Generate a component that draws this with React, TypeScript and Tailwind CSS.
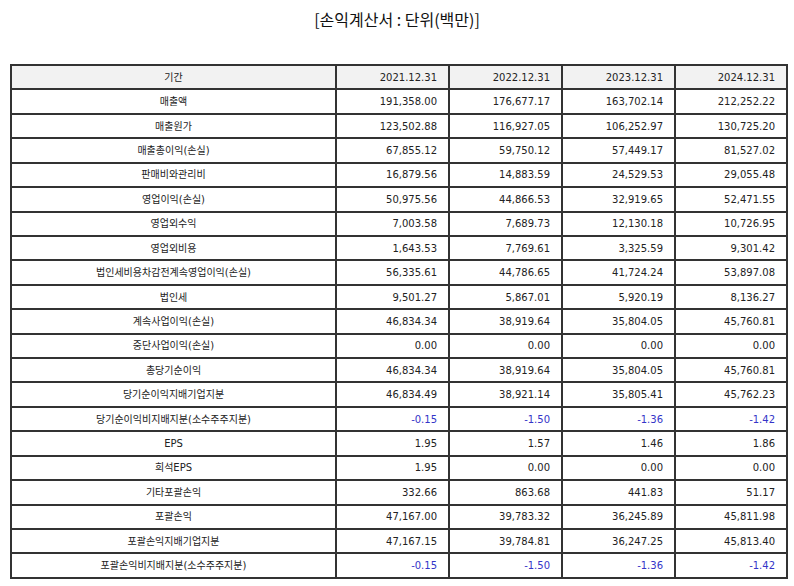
import React from "react";

type Row = { label: string; values: string[] };

const rows: Row[] = [
  { label: "매출액", values: ["191,358.00", "176,677.17", "163,702.14", "212,252.22"] },
  { label: "매출원가", values: ["123,502.88", "116,927.05", "106,252.97", "130,725.20"] },
  { label: "매출총이익(손실)", values: ["67,855.12", "59,750.12", "57,449.17", "81,527.02"] },
  { label: "판매비와관리비", values: ["16,879.56", "14,883.59", "24,529.53", "29,055.48"] },
  { label: "영업이익(손실)", values: ["50,975.56", "44,866.53", "32,919.65", "52,471.55"] },
  { label: "영업외수익", values: ["7,003.58", "7,689.73", "12,130.18", "10,726.95"] },
  { label: "영업외비용", values: ["1,643.53", "7,769.61", "3,325.59", "9,301.42"] },
  { label: "법인세비용차감전계속영업이익(손실)", values: ["56,335.61", "44,786.65", "41,724.24", "53,897.08"] },
  { label: "법인세", values: ["9,501.27", "5,867.01", "5,920.19", "8,136.27"] },
  { label: "계속사업이익(손실)", values: ["46,834.34", "38,919.64", "35,804.05", "45,760.81"] },
  { label: "중단사업이익(손실)", values: ["0.00", "0.00", "0.00", "0.00"] },
  { label: "총당기순이익", values: ["46,834.34", "38,919.64", "35,804.05", "45,760.81"] },
  { label: "당기순이익지배기업지분", values: ["46,834.49", "38,921.14", "35,805.41", "45,762.23"] },
  { label: "당기순이익비지배지분(소수주주지분)", values: ["-0.15", "-1.50", "-1.36", "-1.42"] },
  { label: "EPS", values: ["1.95", "1.57", "1.46", "1.86"] },
  { label: "희석EPS", values: ["1.95", "0.00", "0.00", "0.00"] },
  { label: "기타포괄손익", values: ["332.66", "863.68", "441.83", "51.17"] },
  { label: "포괄손익", values: ["47,167.00", "39,783.32", "36,245.89", "45,811.98"] },
  { label: "포괄손익지배기업지분", values: ["47,167.15", "39,784.81", "36,247.25", "45,813.40"] },
  { label: "포괄손익비지배지분(소수주주지분)", values: ["-0.15", "-1.50", "-1.36", "-1.42"] },
];

const years = ["2021.12.31", "2022.12.31", "2023.12.31", "2024.12.31"];

export default function App() {
  return (
    <div
      className="w-[794px] h-[586px] bg-white text-[#222]"
      style={{ fontFamily: '"DejaVu Sans", "Noto Sans CJK KR", sans-serif' }}
    >
      <div
        className="h-[38px] flex items-center justify-center text-[16px] text-[#111]"
        style={{ fontFamily: '"Noto Sans CJK KR", sans-serif' }}
      >
        [손익계산서 : 단위(백만)]
      </div>
      <div className="pt-[26px] px-[10px]">
        <table className="w-[776px] border-collapse table-fixed text-[10px]">
          <colgroup>
            <col className="w-[325px]" />
            <col className="w-[113px]" />
            <col className="w-[113px]" />
            <col className="w-[113px]" />
            <col className="w-[112px]" />
          </colgroup>
          <thead>
            <tr className="h-[24.43px] bg-[#f2f2f2]">
              <th className="border-2 border-[#333] font-normal text-center p-0">기간</th>
              {years.map((y) => (
                <th key={y} className="border-2 border-[#333] font-normal text-right pr-[11px] py-0">
                  {y}
                </th>
              ))}
            </tr>
          </thead>
          <tbody>
            {rows.map((r) => (
              <tr key={r.label} className="h-[24.43px]">
                <td className="border-2 border-[#333] text-center p-0">{r.label}</td>
                {r.values.map((v, i) => (
                  <td
                    key={i}
                    className={
                      v.startsWith("-")
                        ? "border-2 border-[#333] text-right pr-[11px] py-0 text-[#3434c8]"
                        : "border-2 border-[#333] text-right pr-[11px] py-0"
                    }
                  >
                    {v}
                  </td>
                ))}
              </tr>
            ))}
          </tbody>
        </table>
      </div>
    </div>
  );
}
